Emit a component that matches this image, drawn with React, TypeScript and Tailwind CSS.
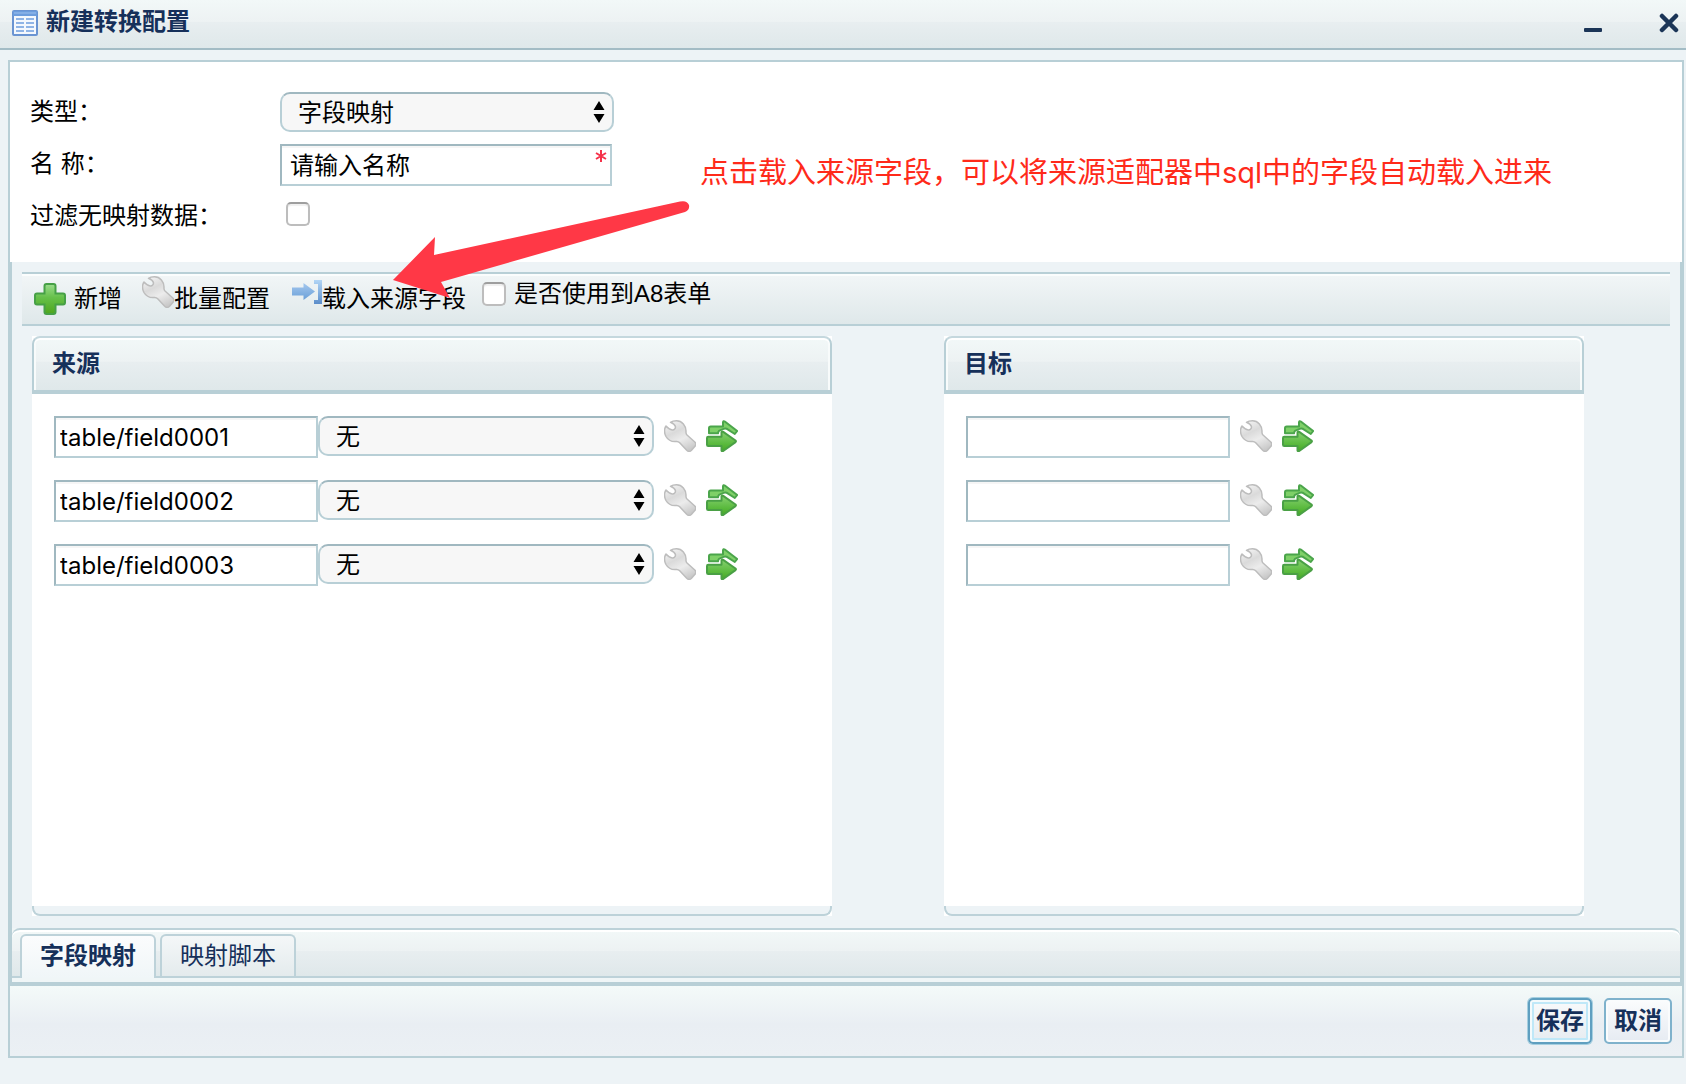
import { useState } from "react";
import type { ReactNode } from "react";

const barFill =
  "bg-[linear-gradient(180deg,#f2f8f8_0%,#edf2f3_45%,#e8eef0_46%,#dfe8ea_100%)]";

function TableIcon() {
  return (
    <svg width="26" height="26" viewBox="0 0 26 26" aria-hidden="true">
      <rect x="1" y="1" width="24" height="24" rx="1" fill="#f4f8fd" stroke="#6a94d2" strokeWidth="2" />
      <rect x="1" y="1" width="24" height="5" fill="#6c9ddd" />
      <path d="M2 3h22" stroke="#9cc0ee" strokeWidth="1" />
      <path
        d="M4 9h8M14 9h8M4 13h8M14 13h8M4 17h8M14 17h8M4 21h8M14 21h8"
        stroke="#8fb4e6"
        strokeWidth="2"
      />
    </svg>
  );
}

function PlusIcon() {
  return (
    <svg width="32" height="32" viewBox="0 0 32 32" aria-hidden="true">
      <defs>
        <linearGradient id="plusFill" x1="0" y1="0" x2="0" y2="1">
          <stop offset="0" stopColor="#9bdc8c" />
          <stop offset="0.45" stopColor="#66c04a" />
          <stop offset="1" stopColor="#4ea61c" />
        </linearGradient>
      </defs>
      <path
        d="M12.500 1h7q2 0 2 2v7.500H29q2 0 2 2v7q0 2-2 2h-7.500V29q0 2-2 2h-7q-2 0-2-2v-7.500H3q-2 0-2-2v-7q0-2 2-2h7.500V3q0-2 2-2Z"
        fill="url(#plusFill)"
        stroke="#46a046"
        strokeWidth="2"
      />
    </svg>
  );
}

function WrenchIcon() {
  return (
    <svg width="32" height="32" viewBox="0 0 32 32" aria-hidden="true">
      <defs>
        <linearGradient id="wrenchFill" x1="0.2" y1="0" x2="0.7" y2="1">
          <stop offset="0" stopColor="#f4f4f4" />
          <stop offset="0.35" stopColor="#dadada" />
          <stop offset="0.62" stopColor="#ececec" />
          <stop offset="1" stopColor="#c8c8c8" />
        </linearGradient>
      </defs>
      <path
        d="M2 6C.4 8.500.2 13 2 16.500c2 3.500 6 5.500 10.500 5 1.500-.1 2.300.3 3.200 1.300l7 7.500c1.500 1.400 3.300 1.400 4.800 0l3.500-4c1.200-1.500 1-3.200-.5-4.600l-7.500-6.700c-1-1-1.200-2-1-3.500C22.200 5.500 18 .8 12.500.8c-2.500 0-4.500.5-6 1.500 2.300 1 4.500 2.500 4.900 4.200.4 1.900-1.200 3.600-3.200 3.400C5.700 9.700 3.800 8 2 6Z"
        fill="url(#wrenchFill)"
        stroke="#bdbdbd"
        strokeWidth="1.500"
        strokeLinejoin="round"
      />
    </svg>
  );
}

function TransferIcon() {
  return (
    <svg width="32" height="32" viewBox="0 0 32 32" aria-hidden="true">
      <defs>
        <linearGradient id="transferFill" x1="0" y1="0" x2="0" y2="1">
          <stop offset="0" stopColor="#86d070" />
          <stop offset="0.6" stopColor="#5cbb40" />
          <stop offset="1" stopColor="#46a822" />
        </linearGradient>
      </defs>
      <path
        d="M3 13.300V8.200q0-1.700 1.700-1.700H17V2.200q.4-1.600 1.800-.7L31.200 11l-2.400 3-8.300-5.300q-1.500-.6-3 .2l-4.500 2q-.8.800-1 2.400Z"
        fill="#7fd068"
        stroke="#4ba54b"
        strokeWidth="2"
        strokeLinejoin="round"
      />
      <path
        d="M2.200 16.800h13.300v-4.300q.3-1.400 1.700-.6l12.300 8.600q.9.800 0 1.600L17.200 31q-1.500.7-1.700-.7V26H2.200Q1 26 1 24.800V18q0-1.200 1.200-1.200Z"
        fill="url(#transferFill)"
        stroke="#4aa045"
        strokeWidth="2"
        strokeLinejoin="round"
      />
    </svg>
  );
}

function LoadIcon() {
  return (
    <svg width="32" height="32" viewBox="0 0 32 32" aria-hidden="true">
      <defs>
        <linearGradient id="loadArrow" x1="0" y1="0" x2="0" y2="1">
          <stop offset="0" stopColor="#a4c8ee" />
          <stop offset="1" stopColor="#6a9fd8" />
        </linearGradient>
        <linearGradient id="loadBracket" x1="0" y1="0" x2="0" y2="1">
          <stop offset="0" stopColor="#b3d6f6" />
          <stop offset="1" stopColor="#5b8dca" />
        </linearGradient>
      </defs>
      <path d="M2 11.500h11.500V7L25 15.500 13.500 24v-4.500H2Z" fill="url(#loadArrow)" />
      <path d="M24 4h8v24h-8v-4h4V8h-4Z" fill="url(#loadBracket)" />
    </svg>
  );
}

function Checkbox({ id }: { id: string }) {
  return (
    <input
      id={id}
      type="checkbox"
      className="size-6 shrink-0 appearance-none rounded-[5px] border-2 border-[#bdbdbd] border-t-[#9e9e9e] bg-white shadow-[inset_0_2px_1px_#f0f0f0] checked:bg-[#6a94d2]"
    />
  );
}

function Select({
  id,
  label,
  options,
  width,
}: {
  id?: string;
  label?: string;
  options: string[];
  width: string;
}) {
  return (
    <div className={`relative h-10 ${width}`}>
      <select
        id={id}
        aria-label={label}
        className="h-10 w-full appearance-none rounded-[10px] border-2 border-[#b8cfd6] border-t-[#a0b8c0] bg-[#f7f7f7] pt-0.5 pl-4 text-[24px] leading-8 text-black"
      >
        {options.map((o) => (
          <option key={o}>{o}</option>
        ))}
      </select>
      <svg
        width="12"
        height="22"
        viewBox="0 0 12 22"
        aria-hidden="true"
        className="pointer-events-none absolute top-[9px] right-[9px]"
      >
        <path d="M6 0l5.500 9H.5ZM6 22l5.500-9H.5Z" fill="#000" />
      </svg>
    </div>
  );
}

const inputStyle =
  "h-[42px] border-2 border-[#b8cfd6] border-t-[#a0b8c0] border-l-[#a0b8c0] bg-white text-[24px] leading-8 text-black shadow-[inset_0_2px_0_#f6f6f6]";

function RowActions({ name }: { name: string }) {
  return (
    <div className="ml-2.5 flex gap-2.5">
      <button type="button" aria-label={`配置 ${name}`}>
        <WrenchIcon />
      </button>
      <button type="button" aria-label={`选择 ${name}`}>
        <TransferIcon />
      </button>
    </div>
  );
}

function Panel({ title, children }: { title: string; children: ReactNode }) {
  return (
    <section className="flex min-w-0 flex-col bg-white">
      <h2
        className={`flex h-[58px] items-center rounded-t-lg border-2 border-b-4 border-[#b8cfd6] border-t-[#c5d8de] pl-[18px] text-[24px] leading-8 font-bold text-[#16305a] shadow-[inset_0_2px_0_#fff,inset_-2px_0_0_#f8fbfb,inset_2px_0_0_#f8fbfb] ${barFill}`}
      >
        {title}
      </h2>
      <div className="flex flex-1 flex-col gap-[22px] px-[22px] pt-[22px]">{children}</div>
      <div className="h-2.5 rounded-b-lg border-x-2 border-b-2 border-[#bdd2d9] bg-[#edf3f6]" />
    </section>
  );
}

const sourceFields = ["table/field0001", "table/field0002", "table/field0003"];

function Pointer() {
  return (
    <svg
      width="300"
      height="100"
      viewBox="0 0 300 100"
      aria-hidden="true"
      className="pointer-events-none absolute top-[138px] left-[382px]"
    >
      <path
        d="M1 80 43 37 42 55 288 1.500Q295 0 297 5Q298 10 293 12L49 82 58 98Z"
        fill="#ff3846"
      />
    </svg>
  );
}

export default function App() {
  const [tab, setTab] = useState(0);
  const labelStyle = "w-[250px] shrink-0";
  return (
    <div className="flex min-h-screen flex-col bg-[#edf3f6] font-['Liberation_Sans','Noto_Sans_CJK_SC',sans-serif] text-[24px] leading-8 text-black">
      <header
        className={`flex h-[50px] items-center border-b-2 border-[#a3bcc5] pr-[7px] pb-0.5 pl-3 ${barFill}`}
      >
        <TableIcon />
        <h1 className="ml-2 flex-1 pb-0.5 font-bold text-[#16305a]">新建转换配置</h1>
        <div className="flex gap-14">
          <button type="button" aria-label="最小化">
            <svg width="20" height="20" viewBox="0 0 20 20" aria-hidden="true">
              <rect x="1" y="15" width="18" height="4" rx="1" fill="#1b3557" />
            </svg>
          </button>
          <button type="button" aria-label="关闭">
            <svg width="20" height="20" viewBox="0 0 20 20" aria-hidden="true">
              <path
                d="M3 3l14 14M17 3L3 17"
                stroke="#1b3557"
                strokeWidth="4.500"
                strokeLinecap="round"
              />
            </svg>
          </button>
        </div>
      </header>

      <main className="relative mt-2.5 mr-0.5 mb-[26px] ml-2 flex flex-1 flex-col border-2 border-[#b8cfd6]">
        <form className="relative bg-white pt-6 pb-5 pl-5">
          <div className="flex h-[52px] items-center">
            <label htmlFor="kind" className={labelStyle}>
              类型：
            </label>
            <Select id="kind" options={["字段映射"]} width="w-[334px]" />
          </div>
          <div className="flex h-[52px] items-center">
            <label htmlFor="name" className={labelStyle}>
              名 称：
            </label>
            <div className="relative pt-0.5">
              <input
                id="name"
                defaultValue="请输入名称"
                className={`block w-[332px] pb-1 pl-2 ${inputStyle}`}
              />
              <svg
                width="12"
                height="12"
                viewBox="0 0 12 12"
                aria-hidden="true"
                className="absolute top-2 right-[5px]"
              >
                <path
                  d="M6 0v12M1 3l10 6M11 3L1 9"
                  stroke="#f5324a"
                  strokeWidth="2"
                />
              </svg>
            </div>
          </div>
          <div className="flex h-[52px] items-center">
            <label htmlFor="filter" className={labelStyle}>
              过滤无映射数据：
            </label>
            <div className="flex pb-1 pl-1.5">
              <Checkbox id="filter" />
            </div>
          </div>
          <p className="absolute top-[91px] left-[690px] font-['Inter','Noto_Sans_CJK_SC',sans-serif] text-[29px] leading-10 whitespace-nowrap text-[#ff2a1a]">
            点击载入来源字段，可以将来源适配器中sql中的字段自动载入进来
          </p>
        </form>

        <div className="flex flex-1 flex-col border-x-2 border-b-4 border-[#b8cfd6] pt-2.5">
          <div
            role="toolbar"
            className="mx-2.5 flex h-[54px] items-center border-y-2 border-[#b8cfd6] bg-linear-to-b from-[#f2f6f7] to-[#dfe8ea] pl-3 shadow-[inset_0_2px_0_#fbfdfd]"
          >
            <button type="button" className="flex items-center gap-2">
              <PlusIcon />
              新增
            </button>
            <button type="button" className="ml-5 flex h-full items-center">
              <span className="self-start pt-0.5">
                <WrenchIcon />
              </span>
              批量配置
            </button>
            <button type="button" className="ml-5 flex h-full items-center">
              <span className="self-start pt-0.5">
                <LoadIcon />
              </span>
              载入来源字段
            </button>
            <div className="ml-4 flex h-10 items-center gap-2 self-start">
              <Checkbox id="a8" />
              <label htmlFor="a8">是否使用到A8表单</label>
            </div>
          </div>

          <div className="mt-2.5 mb-3 grid flex-1 grid-cols-[800fr_640fr] gap-x-28 pr-24 pl-5">
            <Panel title="来源">
              {sourceFields.map((f) => (
                <div key={f} className="flex items-start">
                  <input
                    aria-label={f}
                    defaultValue={f}
                    className={`w-[264px] pl-1 font-['Inter','Noto_Sans_CJK_SC',sans-serif] ${inputStyle}`}
                  />
                  <Select label={`${f} 转换`} options={["无"]} width="w-[336px]" />
                  <div className="flex h-10 items-center">
                    <RowActions name={f} />
                  </div>
                </div>
              ))}
            </Panel>
            <Panel title="目标">
              {sourceFields.map((f) => (
                <div key={f} className="flex items-start">
                  <input aria-label={`${f} 目标`} className={`w-[264px] pl-1 ${inputStyle}`} />
                  <div className="flex h-10 items-center">
                    <RowActions name={`${f} 目标`} />
                  </div>
                </div>
              ))}
            </Panel>
          </div>

          <div className="bg-[#f0f6f7] pb-1">
            <div
              role="tablist"
              className={`flex h-[50px] gap-1 rounded-t-lg border-y-2 border-[#bdd2d9] pt-1 pl-2 shadow-[inset_0_2px_0_#fff] ${barFill}`}
            >
              {["字段映射", "映射脚本"].map((t, i) => (
                <button
                  key={t}
                  type="button"
                  role="tab"
                  aria-selected={tab === i}
                  onClick={() => setTab(i)}
                  className={
                    tab === i
                      ? "h-11 rounded-t-md border-2 border-b-0 border-[#bdd2d9] bg-linear-to-b from-[#fbfcfd] to-[#f0f6f8] px-[18px] pb-0.5 font-bold text-[#16305a]"
                      : "h-[42px] rounded-t-md border-2 border-b-0 border-[#bdd2d9] bg-linear-to-b from-[#f4f7f8] to-[#e4ebed] px-[18px] text-[#16305a]"
                  }
                >
                  {t}
                </button>
              ))}
            </div>
          </div>
        </div>

        <footer className="flex h-[70px] items-center justify-end gap-3 bg-[linear-gradient(180deg,#f4faf9_0%,#e9eef3_55%,#ebf0f4_100%)] pr-2.5">
          <button
            type="button"
            className="h-[46px] rounded-[5px] border-2 border-[#5f9fc0] bg-linear-to-b from-[#f8fafb] to-[#e6ecf1] px-1.5 font-bold text-[#16305a] shadow-[0_0_0_1px_#a5cfe0,inset_0_0_0_2px_#f4fafc,inset_0_0_0_4px_#bfe8f8]"
          >
            保存
          </button>
          <button
            type="button"
            className="h-[46px] rounded-[5px] border-2 border-[#7fb2cc] bg-linear-to-b from-[#fbfcfd] to-[#e6ebf2] px-2 font-bold text-[#16305a] shadow-[inset_0_0_0_2px_#fafcfd]"
          >
            取消
          </button>
        </footer>
        <Pointer />
      </main>
    </div>
  );
}
